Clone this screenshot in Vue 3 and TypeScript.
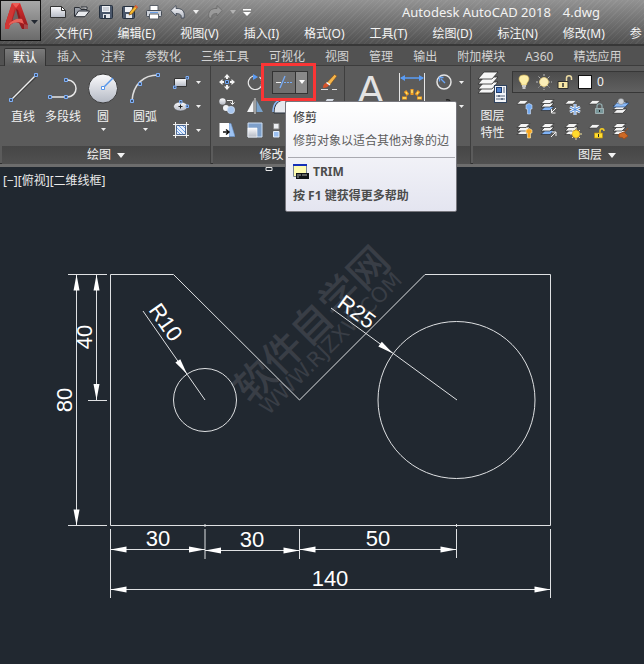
<script setup lang="ts">
interface Arrow {
  x: number
  y: number
  angle: number
}

const menus: string[] = ['文件(F)', '编辑(E)', '视图(V)', '插入(I)', '格式(O)', '工具(T)', '绘图(D)', '标注(N)', '修改(M)', '参']
const tabs: string[] = ['默认', '插入', '注释', '参数化', '三维工具', '可视化', '视图', '管理', '输出', '附加模块', 'A360', '精选应用']

// Arrow heads: tip position and the direction that the tip points to
const arrows: Arrow[] = [
  { x: 76.5, y: 274.5, angle: -90 },
  { x: 76.5, y: 525.5, angle: 90 },
  { x: 96.5, y: 274.5, angle: -90 },
  { x: 96.5, y: 400, angle: 90 },
  { x: 110.5, y: 549.5, angle: 180 },
  { x: 205, y: 549.5, angle: 0 },
  { x: 205, y: 550.5, angle: 180 },
  { x: 299.5, y: 550.5, angle: 0 },
  { x: 299.5, y: 549.5, angle: 180 },
  { x: 456.5, y: 549.5, angle: 0 },
  { x: 110.5, y: 589.5, angle: 180 },
  { x: 550.5, y: 589.5, angle: 0 },
  { x: 187, y: 374, angle: 55 },
  { x: 393, y: 353.5, angle: 36 },
]
</script>

<template>
  <div class="app">
    <svg class="defs" aria-hidden="true">
      <defs>
        <linearGradient id="metal" x1="0" y1="0" x2="0" y2="1">
          <stop offset="0" stop-color="#fbfbfd" />
          <stop offset="1" stop-color="#b4b9c4" />
        </linearGradient>
        <linearGradient id="red" x1="0" y1="0" x2="0" y2="1">
          <stop offset="0" stop-color="#d92f2f" />
          <stop offset="1" stop-color="#8f171b" />
        </linearGradient>
        <symbol id="sheet" viewBox="0 0 16 16">
          <path d="M5 4h9l-4 4H1z" fill="#f4f4f4" stroke="#2b2b2b" stroke-width=".6" />
        </symbol>
        <symbol id="stack" viewBox="0 0 16 16">
          <g fill="#f4f4f4" stroke="#2b2b2b" stroke-width=".7">
            <path d="M5 8.500h9l-4 4H1z" />
            <path d="M5 5h9l-4 4H1z" />
            <path d="M5 1.500h9l-4 4H1z" />
          </g>
        </symbol>
        <symbol id="stack-blue" viewBox="0 0 16 16">
          <g stroke="#2b2b2b" stroke-width=".7">
            <path d="M5 8.500h9l-4 4H1z" fill="#7fb2f5" />
            <path d="M5 5h9l-4 4H1z" fill="#f4f4f4" />
            <path d="M5 1.500h9l-4 4H1z" fill="#f4f4f4" />
          </g>
        </symbol>
      </defs>
    </svg>

    <header class="titlebar">
      <button class="logo" type="button" aria-label="应用程序">
        <svg width="25" height="27" viewBox="0 0 25 27">
          <path d="M8 0h8l8 22v4h-6l-3-6-4-1-5 3-2 4H1v-4z" fill="url(#red)" />
          <path d="M8 0h4L7 20l-2 6H1v-4z" fill="#d23634" />
          <path d="M12 6 8.500 17l7-.5z" fill="#6f6262" />
          <path d="M12 6l2 1 3 10-2 1z" fill="#8e1a1e" />
          <path d="M5 21c3-4 8-6 13-5l2 5c-5-3-10-2-15 1z" fill="#e8645b" />
          <path d="M8 0h8l-4 5z" fill="#ef5c55" />
          <path d="M20 21l4 1v4h-4z" fill="#a5494a" />
        </svg>
        <svg width="7" height="4" viewBox="0 0 7 4"><path d="M0 0h7L3.500 4z" fill="#222831" /></svg>
      </button>
      <div class="rows">
        <div class="quick">
          <button type="button" aria-label="新建">
            <svg width="16" height="16" viewBox="0 0 16 16"><path d="M.5 2.500h11l4 4v7H.5z" fill="url(#metal)" stroke="#333" /><path d="M11.500 2.500v4h4z" fill="#fff" stroke="#333" /></svg>
          </button>
          <button type="button" aria-label="打开">
            <svg width="16" height="16" viewBox="0 0 16 16"><path d="M.5 12.500v-9h5l1.500 2h6v2" fill="#9aa0aa" stroke="#2b2f36" /><path d="M.7 12.700 4.500 7h11l-4.500 5.700z" fill="#e9ebef" stroke="#2b2f36" /><path d="M7 3h6v2" fill="#e8eaee" stroke="#2b2f36" /></svg>
          </button>
          <button type="button" aria-label="保存">
            <svg width="16" height="16" viewBox="0 0 16 16"><rect x="1.500" y="1.500" width="13" height="13" rx="1" fill="#49566a" stroke="#26303e" /><path d="M4 2h8v6H4z" fill="#eef0f4" /><path d="M5 4h6M5 6h6" stroke="#a9b0bd" /><path d="M5 10h7v4H5z" fill="#e2e5ea" /><path d="M6 11h2v3H6z" fill="#344052" /></svg>
          </button>
          <button type="button" aria-label="另存为">
            <svg width="16" height="16" viewBox="0 0 16 16"><rect x=".5" y="2.500" width="12" height="12" rx="1" fill="#49566a" stroke="#26303e" /><path d="M3 3h7v5H3z" fill="#eef0f4" /><path d="M4 10h6v4H4z" fill="#e2e5ea" /><path d="M7 11l1-3 5.500-6.500 2 2L10 10z" fill="#f6b92d" stroke="#7d4d13" stroke-width=".7" /><path d="M12.500 2.500l1.500-1.500 2 2-1.500 1.500z" fill="#e0603c" /></svg>
          </button>
          <button type="button" aria-label="打印">
            <svg width="16" height="16" viewBox="0 0 16 16"><path d="M4 1.500h8v5H4z" fill="#fff" stroke="#5a6069" /><rect x=".5" y="6.500" width="15" height="6" rx="1" fill="#cdd2da" stroke="#454b55" /><path d="M3.500 10h9v5h-9z" fill="#fff" stroke="#5a6069" /><path d="M4 8.500h8" stroke="#6aa0e8" /></svg>
          </button>
          <button type="button" aria-label="放弃">
            <svg width="16" height="16" viewBox="0 0 16 16"><path d="M.8 6.500 6 1.500V4.500c6-.5 9.500 3 8 9.500h-3c1-3-1-4.500-5-4.500V12z" fill="url(#metal)" stroke="#3a4350" stroke-width=".8" /></svg>
          </button>
          <svg class="drop" width="6" height="4" viewBox="0 0 6 4"><path d="M0 0h6L3 4z" fill="#eee" /></svg>
          <button type="button" aria-label="重做" disabled>
            <svg width="16" height="16" viewBox="0 0 16 16"><path d="M15.200 6.500 10 1.500V4.500c-6-.5-9.500 3-8 9.500h3c-1-3 1-4.500 5-4.500V12z" fill="#9a9a9a" stroke="#686868" stroke-width=".8" /></svg>
          </button>
          <svg class="drop" width="6" height="4" viewBox="0 0 6 4"><path d="M0 0h6L3 4z" fill="#b3b3b3" /></svg>
          <svg class="drop" width="8" height="7" viewBox="0 0 8 7"><path d="M0 0h8v1.500H0zM0 3h8L4 7z" fill="#fff" /></svg>
          <h1 class="title"><span>Autodesk AutoCAD 2018</span><span>4.dwg</span></h1>
        </div>
        <nav class="menus">
          <a v-for="menu in menus" :key="menu" href="#">{{ menu }}</a>
        </nav>
      </div>
    </header>

    <nav class="tabs">
      <button v-for="(tab, i) in tabs" :key="tab" type="button" :class="{ active: i === 0 }">{{ tab }}</button>
    </nav>

    <div class="ribbon">
      <section class="panel draw">
        <div class="body">
          <button class="big line" type="button">
            <svg width="32" height="32" viewBox="0 0 32 32"><path d="M4 28 29 4" stroke="#222" stroke-width="3" opacity=".5" /><path d="M4 28 29 3" stroke="#eee" stroke-width="1.500" /><path d="M2.500 26.500h3v3h-3zM27.500 1.500h3v3h-3z" fill="#41546e" stroke="#7fb0fa" /></svg>
            直线
          </button>
          <button class="big poly" type="button">
            <svg width="32" height="32" viewBox="0 0 32 32"><path d="M2 25h18c12 0 12-17 0-17" fill="none" stroke="#e8e8e8" stroke-width="1.500" /><path d="M1.500 23.500h3v3h-3zM17.500 23.500h3v3h-3zM17.500 6.500h3v3h-3z" fill="#41546e" stroke="#7fb0fa" /></svg>
            多段线
          </button>
          <button class="big circle" type="button">
            <svg width="32" height="32" viewBox="0 0 32 32"><circle cx="16" cy="16.500" r="14.500" fill="url(#metal)" stroke="#3a3a3a" /><path d="M16 16 26 6" stroke="#5595ea" stroke-width="1.500" /><path d="M14.500 14.500h3v3h-3z" fill="#fff" stroke="#5595ea" /></svg>
            圆
            <svg class="drop" width="5" height="3" viewBox="0 0 5 3"><path d="M0 0h5L2.500 3z" fill="#eee" /></svg>
          </button>
          <button class="big arc" type="button">
            <svg width="32" height="32" viewBox="0 0 32 32"><path d="M3 29C4 12 15 3 29 3" fill="none" stroke="#ddd" stroke-width="1.500" /><path d="M1.500 27.500h3v3h-3zM9.500 10.500h3v3h-3zM27.500 1.500h3v3h-3z" fill="#41546e" stroke="#7fb0fa" /></svg>
            圆弧
            <svg class="drop" width="5" height="3" viewBox="0 0 5 3"><path d="M0 0h5L2.500 3z" fill="#eee" /></svg>
          </button>
          <div class="column">
            <button type="button" aria-label="矩形">
              <svg width="16" height="16" viewBox="0 0 16 16"><path d="M1.500 4.500h12v8h-12z" fill="url(#metal)" stroke="#333" /><path d="M.5 12h2.500v2.500H.5zM13 2.500h2.500V5H13z" fill="#41546e" stroke="#7fb0fa" /></svg>
              <svg width="5" height="3" viewBox="0 0 5 3"><path d="M0 0h5L2.500 3z" fill="#eee" /></svg>
            </button>
            <button type="button" aria-label="椭圆">
              <svg width="16" height="16" viewBox="0 0 16 16"><ellipse cx="7.500" cy="8.500" rx="7" ry="4.500" fill="url(#metal)" stroke="#444" stroke-width=".6" /><path d="M5.500 8.500h4M7.500 6.500v4" stroke="#222" /><path d="M6.500 2.500H9V5H6.500zM13 7h2.500v2.500H13z" fill="#41546e" stroke="#7fb0fa" /></svg>
              <svg width="5" height="3" viewBox="0 0 5 3"><path d="M0 0h5L2.500 3z" fill="#eee" /></svg>
            </button>
            <button type="button" aria-label="图案填充">
              <svg width="16" height="16" viewBox="0 0 16 16"><path d="M3 3h10v10H3z" fill="#e6effc" /><path d="M4 9l5 5M3 5l8 8M5 3l8 8M9 3l4 4" stroke="#6fa2ea" /><path d="M2.500 0v16M13.500 0v16M0 2.500h16M0 13.500h16" stroke="#f0f0f0" /><path d="M3.500 3.500h9v9h-9z" fill="none" stroke="#2d4b79" stroke-width=".8" /></svg>
              <svg width="5" height="3" viewBox="0 0 5 3"><path d="M0 0h5L2.500 3z" fill="#eee" /></svg>
            </button>
          </div>
        </div>
        <footer>绘图<svg width="8" height="5" viewBox="0 0 8 5"><path d="M0 0h8L4 5z" fill="#f2f2f2" /></svg></footer>
      </section>

      <section class="panel modify">
        <div class="body">
          <button type="button" aria-label="移动">
            <svg width="16" height="16" viewBox="0 0 16 16"><path d="M8 0l3 3.500H9V5H7V3.500H5zM8 16l3-3.500H9V11H7v1.500H5zM0 8l3.500-3v2H5v2H3.500v2zM16 8l-3.500-3v2H11v2h1.500v2z" fill="#f4f4f4" /><path d="M6.500 6.500h3v3h-3z" fill="#33435a" stroke="#6fa6f5" /></svg>
          </button>
          <button type="button" aria-label="旋转">
            <svg width="16" height="16" viewBox="0 0 16 16"><path d="M12.500 3A7 7 0 1 1 6 2" fill="none" stroke="#e9e9e9" stroke-width="1.200" /><path d="M14 6c1 3 0 6-2 8" fill="none" stroke="#aaa" stroke-dasharray="1 1" /><path d="M6 0l5 3-5 3z" fill="#5b9bf3" /></svg>
          </button>
          <div class="trim">
            <button class="main" type="button" aria-label="修剪">
              <svg width="18" height="14" viewBox="0 0 18 14"><path d="M1 7.500h5" stroke="#eee" /><path d="M5 13 10 1" stroke="#76abf6" stroke-width="1.300" /><path d="M9 7.500h9" stroke="#76abf6" stroke-dasharray="2 1" /></svg>
            </button>
            <button class="more" type="button" aria-label="修剪选项">
              <svg width="6" height="4" viewBox="0 0 6 4"><path d="M0 0h6L3 4z" fill="#fff" /></svg>
            </button>
            <div class="tooltip" role="tooltip">
              <strong class="name">修剪</strong>
              <p>修剪对象以适合其他对象的边</p>
              <hr />
              <div class="command">
                <svg width="16" height="16" viewBox="0 0 16 16"><path d="M.5.500h13v12H.5z" fill="#fdfbb0" stroke="#7b8794" /><path d="M0 0h14v2H0z" fill="#1530b8" /><path d="M3 9h13v6H3z" fill="#101418" /><path d="M4 11h4M9 11h5M4 13h2" stroke="#d7d7d7" stroke-width=".8" /></svg>
                <strong>TRIM</strong>
              </div>
              <strong class="help">按 F1 键获得更多帮助</strong>
            </div>
          </div>
          <button type="button" aria-label="删除">
            <svg width="16" height="16" viewBox="0 0 16 16"><path d="M0 15.500h7M11 15.500h5" stroke="#ddd" /><path d="M2 14c0-4 2-5 4-5l2 2c-1 2-3 3-6 3z" fill="#d5532a" /><path d="M6 8.500 13.500.5l2.500 1.500L9 11z" fill="#f6b54a" stroke="#7a4a18" stroke-width=".6" /><path d="M5.500 8.500 9 11" stroke="#fff" stroke-width="1.500" /></svg>
          </button>

          <button type="button" aria-label="复制">
            <svg width="16" height="16" viewBox="0 0 16 16"><circle cx="3.500" cy="3.500" r="3.200" fill="url(#metal)" /><circle cx="7" cy="10" r="3" fill="#f1f3f7" /><circle cx="12" cy="12" r="3.700" fill="#a8c6ee" stroke="#dce8f8" stroke-width=".6" /><path d="M8 2.500h5.500V6M11.500 4.500l2 2 2-2" fill="none" stroke="#eee" /></svg>
          </button>
          <button type="button" aria-label="镜像">
            <svg width="16" height="16" viewBox="0 0 16 16"><path d="M6.500 2v12H0z" fill="#f3f4f6" /><path d="M9.500 2v12H16z" fill="#79a2cb" /><path d="M8 0v16" stroke="#e6e6e6" /></svg>
          </button>
          <button type="button" aria-label="圆角">
            <svg width="16" height="16" viewBox="0 0 16 16"><path d="M2 15C2 6 6 2 14 2v13z" fill="#e5e8ed" stroke="#27303c" /><path d="M1 14C1 6 5 1 14 1" fill="none" stroke="#8bb6f2" stroke-width="1.500" /></svg>
          </button>
          <button type="button" aria-label="分解">
            <svg width="16" height="16" viewBox="0 0 16 16"><path d="M6 1h7l-2 3H4z" fill="#d4dae4" /></svg>
          </button>

          <button type="button" aria-label="拉伸">
            <svg width="16" height="16" viewBox="0 0 16 16"><path d="M10 1.500h2l4 13h-6z" fill="#9ec3f2" stroke="#6b96cc" stroke-width=".6" /><path d="M.5 1h9.500v14H.5z" fill="#fff" /><path d="M4 10h5M7 7.500l3 2.500-3 2.500" fill="none" stroke="#111" stroke-width="1.500" /></svg>
          </button>
          <button type="button" aria-label="缩放">
            <svg width="16" height="16" viewBox="0 0 16 16"><path d="M1 1h14v14H1z" fill="#7d9fca" stroke="#cfe0f5" /><path d="M1 6h9v9H1z" fill="url(#metal)" stroke="#fff" stroke-width=".6" /></svg>
          </button>
          <button type="button" aria-label="阵列">
            <svg width="16" height="16" viewBox="0 0 16 16"><path d="M1.500 1.500H7V7H1.500z" fill="#eceef2" stroke="#888" /><path d="M1.500 9.500H7V15H1.500z" fill="#9dc2f3" stroke="#e4effc" /></svg>
          </button>
        </div>
        <footer>修改<svg width="8" height="5" viewBox="0 0 8 5"><path d="M0 0h8L4 5z" fill="#f2f2f2" /></svg></footer>
      </section>

      <section class="panel annotate">
        <div class="body">
          <button class="letter" type="button">A</button>
          <button class="dimension" type="button" aria-label="标注">
            <svg width="28" height="32" viewBox="0 0 28 32"><path d="M1.500 1v31M26.500 1v31" stroke="#e6e6e6" /><path d="M3 6h22" stroke="#5a9cf5" stroke-width="1.500" /><path d="M2 6l5-3v6zM26 6l-5-3v6z" fill="#5a9cf5" /><path d="M14 17v6M7 19l3 4M21 19l-3 4M4 26h5M19 26h5" stroke="#ef9b22" stroke-width="3" /><path d="M14 18v3M8 20l1 2M20 20l-1 2M5 26h3M20 26h3" stroke="#ffe46b" stroke-width="1.500" /></svg>
          </button>
          <div class="column">
            <button type="button" aria-label="半径标注">
              <svg width="16" height="16" viewBox="0 0 16 16"><circle cx="8" cy="8" r="7" fill="none" stroke="#e4e4e4" stroke-width="1.500" /><path d="M9 9 5 5M3.500 7.500v-4h4" fill="none" stroke="#69a5f6" stroke-width="1.300" /></svg>
              <svg width="5" height="3" viewBox="0 0 5 3"><path d="M0 0h5L2.500 3z" fill="#eee" /></svg>
            </button>
            <button type="button" aria-label="引线">
              <svg width="16" height="16" viewBox="0 0 16 16"><path d="M10 2q3-1 4 1" fill="none" stroke="#222" stroke-width="1.500" /></svg>
              <svg width="5" height="3" viewBox="0 0 5 3"><path d="M0 0h5L2.500 3z" fill="#eee" /></svg>
            </button>
          </div>
        </div>
        <footer></footer>
      </section>

      <section class="panel layers">
        <div class="body">
          <button class="big properties" type="button">
            <svg width="32" height="32" viewBox="0 0 32 32">
              <g fill="#f6f6f6" stroke="#2c2c2c" stroke-width=".8"><path d="M7 15h14l-6 7H1z" /><path d="M7 11h14l-6 7H1z" /><path d="M7 6h14l-6 7H1z" /><path d="M7 1h14l-6 7H1z" /></g>
              <rect x="17.500" y="14.500" width="12" height="17" fill="#f3f5f9" stroke="#30435e" /><rect x="19.500" y="16.500" width="5" height="5" fill="#4d80cd" stroke="#1e3d70" /><path d="M26 17h2M26 19h2M26 21h2M19 25h9M19 28h9" stroke="#55647c" /><path d="M22 24v2M25 27v2" stroke="#253650" />
            </svg>
            图层<br />特性
          </button>
          <div class="tools">
            <div class="combo">
              <svg width="14" height="16" viewBox="0 0 14 16"><path d="M7 1c6 0 6 5 3 8l-.5 2h-5L4 9C1 6 1 1 7 1z" fill="#fdeea8" stroke="#d9b95a" stroke-width=".6" /><path d="M5 12h4M5.500 14h3" stroke="#ececec" stroke-width="1.500" /></svg>
              <svg width="16" height="16" viewBox="0 0 16 16"><path d="M8 0v16M0 8h16M2.500 2.500l11 11M13.500 2.500l-11 11" stroke="#bdbdbd" stroke-dasharray="2 1" /><circle cx="8" cy="8" r="4.500" fill="#fbeeb8" stroke="#e4c66b" stroke-width=".6" /></svg>
              <svg width="16" height="16" viewBox="0 0 16 16"><path d="M9.500 8V4c0-3 5-3 5 0v2" fill="none" stroke="#ead9a2" stroke-width="1.500" /><path d="M1 7.500h10v7H1z" fill="#f8e7a5" stroke="#2d2d2d" /><path d="M6 9v4" stroke="#333" stroke-width="1.500" /></svg>
              <span class="swatch"></span>
              <select aria-label="图层"><option>0</option></select>
            </div>
            <div class="icons">
              <button type="button" aria-label="关闭图层"><svg width="18" height="18" viewBox="0 0 18 18"><use href="#sheet" width="14" height="14" y="-1" /><path d="M10 7q3-3 6 0v4h-1.500v5h-3v-5H10z" fill="#73aaf1" stroke="#d1e3fb" stroke-width=".6" /></svg></button>
              <button type="button" aria-label="隔离"><svg width="18" height="18" viewBox="0 0 18 18"><use href="#stack-blue" width="16" height="16" /><path d="M16 10l-4 4M11.500 11v4h4" fill="none" stroke="#f2f2f2" /></svg></button>
              <button type="button" aria-label="冻结"><svg width="18" height="18" viewBox="0 0 18 18"><use href="#sheet" width="14" height="14" y="-1" /><path d="M11 6v11M6 9l10 5M6 14l10-5" stroke="#f3f8ff" stroke-width="3" /><path d="M11 6v11M6 9l10 5M6 14l10-5" stroke="#4b88db" /></svg></button>
              <button type="button" aria-label="锁定"><svg width="18" height="18" viewBox="0 0 18 18"><use href="#sheet" width="14" height="14" y="-1" /><path d="M9 10V8c0-3 5-3 5 0v2" fill="none" stroke="#95afb2" stroke-width="1.200" /><path d="M7.500 10.500h8v5h-8z" fill="#79979a" stroke="#b5c7c9" stroke-width=".7" /><path d="M11.500 12v2" stroke="#222" /></svg></button>
              <button type="button" aria-label="置为当前"><svg width="18" height="18" viewBox="0 0 18 18"><use href="#stack" width="17" height="17" y="2" /><path d="M5 5h12l-4 4H1z" fill="#8ab8f4" stroke="#284a7c" stroke-width=".7" /><circle cx="9" cy="3.500" r="3" fill="#ccd2da" stroke="#777" stroke-width=".5" /></svg></button>
              <button type="button" aria-label="打开所有图层"><svg width="18" height="18" viewBox="0 0 18 18"><use href="#stack" width="16" height="16" /><path d="M10 8q3-3 6 0v3h-1.500v5h-3v-5H10z" fill="#f8a51f" stroke="#fff0ba" stroke-width=".6" /></svg></button>
              <button type="button" aria-label="取消隔离"><svg width="18" height="18" viewBox="0 0 18 18"><use href="#stack-blue" width="16" height="16" /><path d="M11 15l5-5M12 10h4v4" fill="none" stroke="#f2f2f2" /></svg></button>
              <button type="button" aria-label="解冻"><svg width="18" height="18" viewBox="0 0 18 18"><use href="#stack" width="16" height="16" /><path d="M12 6v12M6 12h12M8 8l8 8M16 8l-8 8" stroke="#f5e6a0" /><circle cx="12" cy="12" r="3.700" fill="#ffdc2d" stroke="#f6a80f" stroke-width=".6" /></svg></button>
              <button type="button" aria-label="解锁"><svg width="18" height="18" viewBox="0 0 18 18"><use href="#sheet" width="14" height="14" y="-1" /><path d="M12 11V9c0-3 4-3 4 0" fill="none" stroke="#f5cd22" stroke-width="1.500" /><path d="M6.500 11h8v5h-8z" fill="#ffdf32" stroke="#c08c0a" stroke-width=".7" /><path d="M10.500 12v3" stroke="#222" /></svg></button>
              <button type="button" aria-label="匹配图层"><svg width="18" height="18" viewBox="0 0 18 18"><use href="#stack" width="16" height="16" /><path d="M16 6l-4 5M7 12l5-2 4 4-4 3q-1-2-5-2z" fill="#cc6a27" stroke="#9c4d1c" stroke-width="1" /></svg></button>
            </div>
          </div>
        </div>
        <footer>图层<svg width="8" height="5" viewBox="0 0 8 5"><path d="M0 0h8L4 5z" fill="#f2f2f2" /></svg></footer>
      </section>
    </div>

    <main class="canvas">
      <div class="viewport">
        <span>[−][俯视][二维线框]</span>
        <svg class="handle" width="8" height="5" viewBox="0 0 8 5"><path d="M1 .5h6v3H1z" fill="none" stroke="#e6e6e6" /></svg>
      </div>
      <svg class="drawing" viewBox="0 200 644 464" role="img" aria-label="图纸">
        <g class="watermark" transform="rotate(-45)">
          <text class="brand" x="-9" y="464">软件自学网</text>
          <text class="site" x="-9" y="484">WWW.RJZXW.COM</text>
        </g>
        <g class="shape">
          <path d="M110.500 274.500H173.500L299.500 400 425 274.500H550.500V525.500H110.500z" />
          <circle cx="205" cy="400" r="31.500" />
          <circle cx="456.500" cy="400" r="78.500" />
          <path d="M143 311 205 400M331 308 457 400" />
        </g>
        <g class="dims">
          <path d="M68 274.500H107M68 525.500H107M88 400.500H107M76.500 275V525M96.500 275V400" />
          <path d="M110.500 529V598M550.500 529V598M205 529V559M299.500 529V559M456.500 529V558M205 524v3M456.500 524v3" />
          <path d="M111 549.500H205M205 550.500H299M300 549.500H456M111 589.500H550" />
        </g>
        <path v-for="(a, i) in arrows" :key="i" class="head" d="M0 0-16-3V3z" :transform="`translate(${a.x} ${a.y}) rotate(${a.angle})`" />
        <g class="values">
          <text x="158" y="546">30</text>
          <text x="252" y="547">30</text>
          <text x="378" y="546">50</text>
          <text x="330" y="586">140</text>
          <text transform="translate(72 400) rotate(-90)">80</text>
          <text transform="translate(92 337) rotate(-90)">40</text>
          <text class="leader" transform="translate(148 310) rotate(55)">R10</text>
          <text class="leader" transform="translate(336 306) rotate(36)">R25</text>
        </g>
      </svg>
    </main>
  </div>
</template>

<style>
body {
  background: #212830;
}
</style>

<style scoped>
.app {
  display: flex;
  flex-direction: column;
  min-height: 100vh;
  overflow: hidden;
  background: #212830;
  color: #f2f2f2;
  font: 12px/16px 'Noto Sans', 'Noto Sans CJK SC', sans-serif;
}
.defs {
  position: absolute;
  width: 0;
  height: 0;
}
svg {
  display: block;
  flex: none;
}
button {
  display: flex;
  align-items: center;
  flex: none;
  padding: 0;
  border: 0;
  background: none;
  color: inherit;
  font: inherit;
}

.titlebar {
  display: flex;
  height: 44px;
  border-bottom: 2px solid #373737;
  background:
    repeating-linear-gradient(135deg, rgba(255, 255, 255, 0.05) 0 1px, transparent 1px 4px),
    linear-gradient(#929292, #505050);
}
.logo {
  align-items: flex-start;
  justify-content: center;
  gap: 2px;
  width: 41px;
  height: 41px;
  padding-top: 2px;
  border: 1px solid #111;
  background: linear-gradient(#a8a8a8, #6b6b6b);
}
.logo svg + svg {
  align-self: center;
}
.rows {
  flex: 1;
  min-width: 0;
}
.quick {
  display: flex;
  align-items: center;
  gap: 8px;
  height: 24px;
  padding-left: 9px;
}
.quick .drop {
  margin-left: -1px;
}
.title {
  display: flex;
  gap: 12px;
  margin: 0 0 0 143px;
  font-size: 13px;
  font-weight: 400;
  white-space: nowrap;
}
.menus {
  display: flex;
  gap: 25px;
  padding-left: 14px;
  line-height: 20px;
}
.menus a {
  flex: none;
  color: #f4f4f4;
  text-decoration: none;
}

.tabs {
  display: flex;
  height: 20px;
  padding-left: 4px;
  background: #525252;
  box-shadow: inset 0 -1px #3c3c3c;
}
.tabs button {
  padding: 2px 10px 0;
  color: #d2d2d2;
}
.tabs .active {
  margin: 2px 1px 0 0;
  padding: 0 8px;
  border: 1px solid #333;
  border-bottom: 0;
  border-radius: 2px 2px 0 0;
  background: linear-gradient(#7a7a7a, #5b5b5b);
  color: #fff;
}

.ribbon {
  display: flex;
  gap: 2px;
  height: 98px;
  padding-left: 2px;
  border-bottom: 3px solid #6d6d6d;
  background: #5b5b5b;
  box-shadow: inset 0 -1px #303030;
}
.panel {
  display: flex;
  flex-direction: column;
  flex: none;
  border-right: 1px solid #3e3e3e;
}
.draw {
  width: 208px;
}
.modify {
  width: 131px;
}
.annotate {
  width: 123px;
}
.layers {
  width: 248px;
}
.body {
  display: flex;
  flex: 1;
  padding-top: 6px;
}
.panel footer {
  display: flex;
  align-items: center;
  justify-content: center;
  gap: 6px;
  height: 18px;
  background: linear-gradient(#464646, #505050);
}
.big {
  flex-direction: column;
  align-self: flex-start;
  line-height: 17px;
}
.big > svg:first-child {
  margin-bottom: 4px;
}
.big .drop {
  margin-top: 3px;
}
.draw .body {
  padding-left: 3px;
}
.line,
.circle {
  width: 36px;
}
.poly {
  width: 44px;
}
.arc {
  width: 48px;
}
.column {
  display: flex;
  flex-direction: column;
  margin: -2px 0 0 4px;
}
.column button {
  gap: 7px;
  height: 24px;
}

.modify .body {
  display: grid;
  grid-template-columns: 28px 25px 49px 16px;
  grid-template-rows: 24px 24px 24px;
  align-items: center;
  padding: 4px 0 0 6px;
}
.trim {
  position: relative;
  display: flex;
  width: 36px;
  height: 23px;
  border: 1px solid #333;
  box-sizing: border-box;
}
.trim::after {
  content: '';
  position: absolute;
  inset: -9px -9px -8px -12px;
  border: 3px solid #fb3535;
  pointer-events: none;
}
.trim .main,
.trim .more {
  justify-content: center;
  width: 22px;
  background: #6f6f6f;
}
.trim .more {
  width: 12px;
  border-left: 1px solid #333;
  background: #898989;
}
.tooltip {
  position: absolute;
  z-index: 2;
  top: 29px;
  left: 12px;
  box-sizing: border-box;
  width: 172px;
  height: 111px;
  padding: 8px 1px 0 7px;
  border: 1px solid #77777d;
  border-radius: 2px;
  background: linear-gradient(#fff, #e4e5f0);
  color: #4c4c4c;
  white-space: nowrap;
}
.tooltip .name {
  display: block;
  font-weight: 500;
}
.tooltip p {
  margin: 7px 0 0;
  color: #5c5c5c;
}
.tooltip hr {
  margin: 8px 0 6px -5px;
  border: 0;
  border-top: 1px solid #a9a9b0;
}
.command {
  display: flex;
  align-items: center;
  gap: 4px;
}
.help {
  display: block;
  margin-top: 8px;
}

.letter {
  align-self: flex-start;
  width: 47px;
  justify-content: center;
  color: #e3e3e3;
  font: 40px/36px 'Liberation Sans', sans-serif;
}
.dimension {
  align-self: flex-start;
  margin-left: 4px;
}
.annotate .column {
  margin-left: 10px;
}

.layers .body {
  padding-top: 5px;
}
.properties {
  width: 39px;
}
.tools {
  flex: 1;
  min-width: 0;
}
.combo {
  display: flex;
  align-items: center;
  gap: 5px;
  height: 22px;
  padding-left: 4px;
  border: 1px solid #373737;
  box-sizing: border-box;
  background: linear-gradient(#4c4c4c, #606060);
}
.swatch {
  width: 12px;
  height: 12px;
  border: 1px solid #111;
  background: #fff;
}
.combo select {
  flex: 1;
  padding: 0;
  border: 0;
  appearance: none;
  background: none;
  color: #f2f2f2;
  font: inherit;
}
.icons {
  display: grid;
  grid-template-columns: repeat(5, 24px);
  grid-auto-rows: 24px;
  padding: 2px 0 0 4px;
}

.canvas {
  flex: 1;
}
.viewport {
  display: flex;
  align-items: flex-start;
  box-sizing: border-box;
  height: 33px;
  padding-left: 3px;
}
.viewport span {
  width: 262px;
  padding-top: 6px;
  color: #eaeaea;
}
.drawing {
  width: 100%;
  height: auto;
}
.shape,
.dims {
  fill: none;
  stroke: #dfe1e3;
}
.head,
.values {
  fill: #fff;
}
.values {
  font: 22px 'Liberation Sans', sans-serif;
}
.values,
.watermark {
  text-anchor: middle;
}
.values .leader {
  text-anchor: start;
}
.watermark {
  fill: #393e46;
}
.brand {
  font: 500 40px 'Noto Sans CJK SC', sans-serif;
}
.site {
  font: 21px 'DejaVu Sans', sans-serif;
}
</style>
